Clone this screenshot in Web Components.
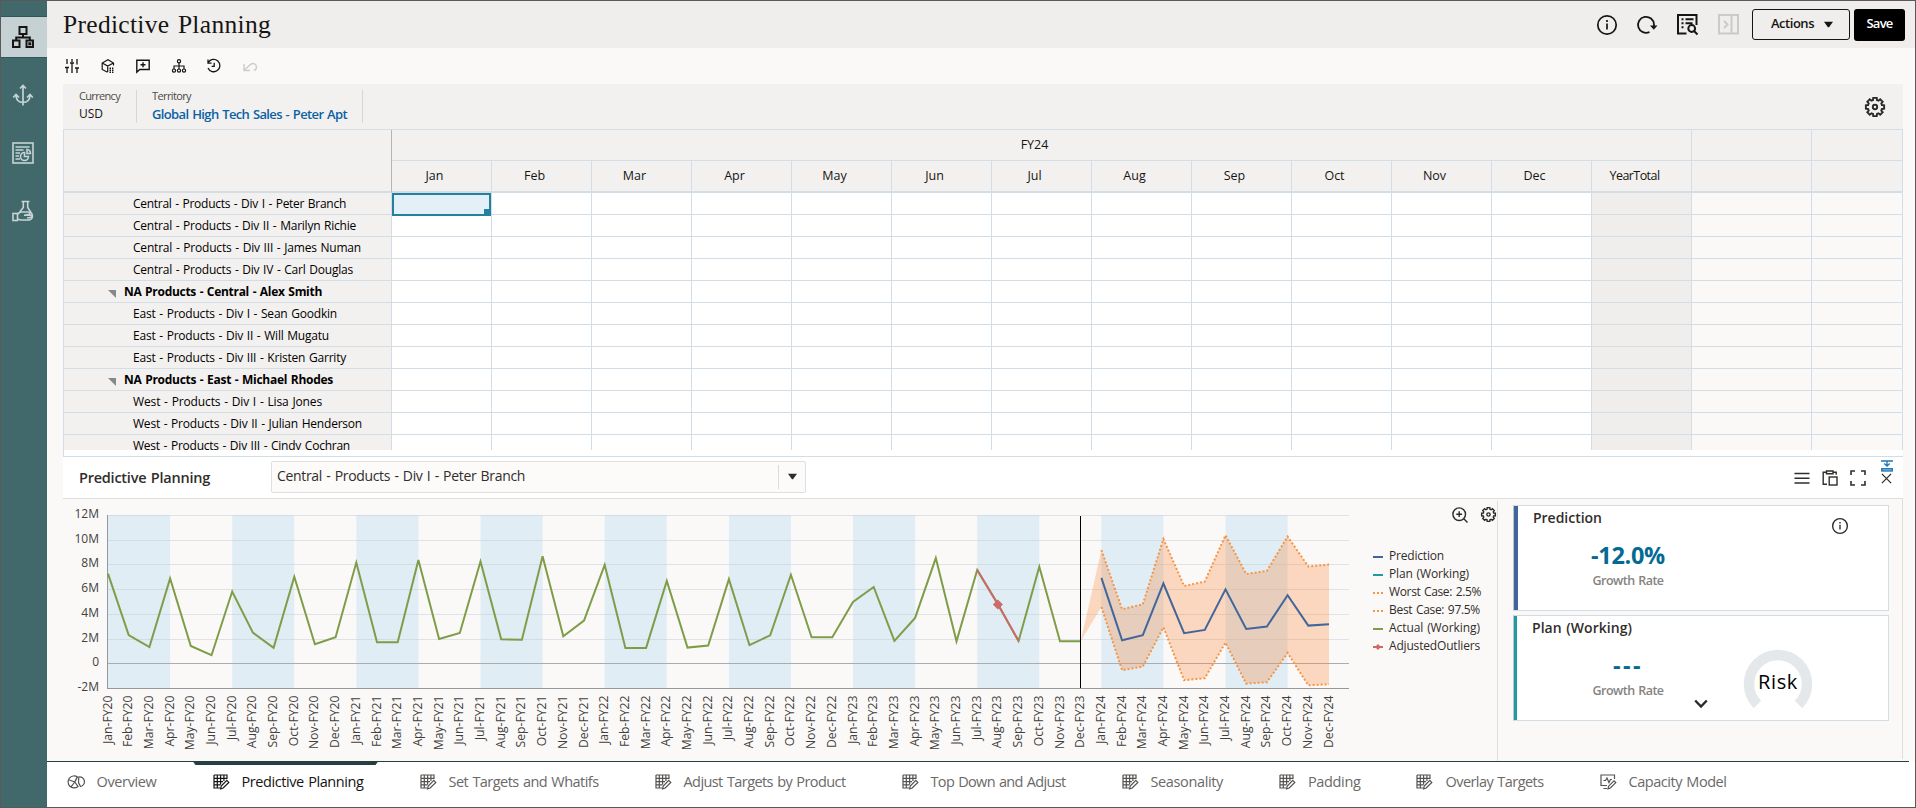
<!DOCTYPE html>
<html lang="en">
<head>
<meta charset="utf-8">
<title>Predictive Planning</title>
<style>
  html, body {
    margin: 0;
    height: 100%;
    overflow: hidden;
  }

  body {
    font-family: "Open Sans", "Noto Sans", sans-serif;
    font-size: 12.5px;
    color: #161513;
    background: #fbf9f8;
  }
</style>
</head>
<body>
<pp-app></pp-app>

<script>
  const GEAR = (() => {
    // eight-tooth cog around 10,10
    const pts = [];
    for (let i = 0; i < 8; i++) {
      const a = (i * Math.PI) / 4;
      [[-0.28, 7.2], [-0.19, 9.3], [0.19, 9.3], [0.28, 7.2]].forEach(([d, r]) => {
        pts.push((10 + r * Math.sin(a + d)).toFixed(2) + ' ' + (10 - r * Math.cos(a + d)).toFixed(2));
      });
    }
    return `<path d="M${pts.join('L')}z"/><circle cx="10" cy="10" r="2.2"/>`;
  })();

  const SHEET = `<path d="M1 1h13v4M1 1v13h6M1 4.3h13M1 7.6h9M1 10.9h6.5M4.3 1v13M7.6 1v9.5M10.9 1v6"/>
    <path d="M7.6 14.8l.6-2.8 5.6-5.6 2 2-5.6 5.6z"/>`;

  // name: [viewBox size, stroke width, markup]
  const ICONS = {
    network: [22, 2, `<rect x="7.5" y="1" width="7" height="7"/><path d="M11 8v3.5M4.2 14.5v-3h13.6v3"/>
      <rect x="1" y="14.5" width="6.5" height="6.5"/><rect x="14.5" y="14.5" width="6.5" height="6.5"/>
      <rect x="16.3" y="16.3" width="3" height="3" fill="currentColor" stroke="none"/>`],
    anchor: [22, 1.7, '<path d="M11 1.5v20M8 4.5l3-3 3 3M4 11.5c.3 4.3 3 7 7 7s6.7-2.7 7-7M1.2 13.5l2.8-3 3 3M15 13.5l3-3 2.8 3"/>'],
    report: [22, 1.6, `<rect x="1" y="1" width="20" height="20"/><path d="M3.5 5h14M3.5 8h8M3.5 11h4.5M3.5 14h3.5M3.5 17h4.5"/>
      <path d="M12.5 10.5v4h4a4 4 0 1 1-4-4zM15 7.5a4 4 0 0 1 3.5 4H15z"/>`],
    flask: [22, 1.6, `<path d="M9.5 1.5h8M11.3 1.5v6L7.7 12M15.7 1.5v6l4.3 6.5c1 2.7 0 5-2.5 6h-9l-3-1"/>
      <rect x="1" y="13.5" width="4.5" height="7"/><path d="M5.5 14l3-2h8c2 .3 2 2.300 0 2.600l-4.500.7h8.500M20 15.500c.5 1.500-2 2.500-5 2.500"/>`],
    sliders: [14, 1.3, '<path d="M2 0v5M2 9v5M7 0v3M7 4.5V14M12 0v5.5M12 9.5V14M0 8.5h4M5 4h4M10 9h4"/>'],
    cube: [14, 1.2, `<path d="M12.5 6.500V4L7 .8 1.200 4v6.500L6.500 13.300M1.200 4l5.500 3 5.800-3M6.700 7v6"/>
      <path d="M8.500 9.200h1.500M11 9.200h1.400M8.500 11.200h1.500M11 11.200h1.400M8.500 13.200h1.500M11 13.200h1.400" stroke-width="1.4"/>`],
    comment: [14, 1.4, '<path d="M.8 1.2h12.4v9.3H3.8L.8 13.2zM7 3.3v5M4.5 5.8h5"/>'],
    tree: [14, 1.2, `<circle cx="7" cy="2.3" r="1.6"/><circle cx="2" cy="11.6" r="1.6"/><circle cx="7" cy="11.6" r="1.6"/>
      <circle cx="12" cy="11.6" r="1.6"/><path d="M7 4v6M2 10V7h10v3"/>`],
    history: [14, 1.3, '<path d="M1.3 3.5A6.2 6.2 0 1 1 1 9M1 .5v3.6h3.6M7.2 3.8v3.6H4.6"/>'],
    undo: [14, 1.5, '<path d="M1 5v6.5h6M1.5 11l5.8-5.3c3-2.3 6.2-.7 6.2 2.3 0 1.8-1.2 3.2-2.8 3.5"/>'],
    info: [20, 1.7, '<circle cx="10" cy="10" r="9.2"/><path d="M10 8.5v6M10 5v1.9"/>'],
    refresh: [20, 1.8, '<path d="M12.5 17A8 8 0 1 1 17 9.500v2"/><path d="M13 10.5h7.5l-3.7 4.2z" fill="currentColor" stroke="none"/>'],
    docsearch: [21, 2, `<path d="M9.5 19.5H1V1h18.5v10M4.5 5.3h2M8.5 5.3h8M4.5 9.3h2M8.5 9.3h7M4.5 13.3h2"/>
      <circle cx="14.7" cy="14.5" r="3.4"/><path d="M17 17l3.5 3.5"/>`],
    collapse: [21, 2, '<rect x="1" y="1" width="19" height="18.5"/><path d="M13.5 1v18.5M6 7l3.5 3.5L6 14"/>'],
    gear: [20, 1.9, GEAR],
    sheet: [16, 1.2, SHEET],
    pies: [16, 1.2, `<path d="M9.5 3A6 6 0 1 0 10 12.5L6.8 8zM6.8 8L1.3 6M6.8 8L3 12.8M9 3.2L6.8 8"/>
      <path d="M10.5 8.5l.3-5.5a4.8 4.8 0 0 1 1.7 9.5z"/>`],
    model: [16, 1.2, `<path d="M7 11.5H1V1h13.5v4M3.5 14.5H7M3.5 6.5h2L7 4l2 4.5 1.5-3H12"/>
      <path d="M8 14.8l.6-2.6 5.4-5.4 1.8 1.8-5.4 5.4z"/>`],
    zoomin: [16, 1.4, '<circle cx="7.2" cy="7.2" r="6.3"/><path d="M11.8 11.8l3.7 3.7M7.2 4.3v5.8M4.3 7.2h5.8"/>'],
    menu: [16, 1.4, '<path d="M.5 3.5h15M.5 8.2h15M.5 13h15"/>'],
    paste: [16, 1.4, '<path d="M5 14.3H1.2v-12h3.3M11 2.3h3.2v2.5M4.5 1H11v2.8H4.500z"/><rect x="7.2" y="7" width="7.8" height="8"/>'],
    expand: [16, 1.6, '<path d="M1 5V1h4M11 1h4v4M15 11v4h-4M5 15H1v-4"/>'],
    close: [12, 1.4, '<path d="M1 1l10 10M11 1L1 11"/>'],
    dock: [12, 1.3, '<path d="M0 1h12M6 1v5M3.3 3.5L6 6.2l2.7-2.7"/><rect x=".7" y="8.7" width="10.6" height="2.3" fill="#9fb9d5"/>'],
    caret: [10, 0, '<path d="M0 2h10L5.600 8h-1.200z" fill="currentColor"/>'],
    chevron: [14, 2.4, '<path d="M1.2 3.5l5.8 6 5.8-6"/>']
  };

  class PpElement extends HTMLElement {
    constructor() {
      super();
      this.attachShadow({ mode: 'open' });
    }

    connectedCallback() {
      this.shadowRoot.innerHTML = `<style>
        :host { display: block; box-sizing: border-box; }
        * { box-sizing: border-box; }
        ${this.css ? this.css() : ''}
      </style>${this.html()}`;
    }
  }

  // Single line of text, tracked so that it takes up exactly "w" pixels
  class PpText extends PpElement {
    css() {
      return ':host { display: inline-block; white-space: nowrap; flex: none; word-spacing: .07em; }';
    }
    html() {
      return '<slot></slot>';
    }
    connectedCallback() {
      super.connectedCallback();
      const w = Number(this.getAttribute('w'));
      const count = this.textContent.length;
      if (w && count > 1) {
        const natural = this.getBoundingClientRect().width;
        this.style.letterSpacing = ((w - natural) / count).toFixed(3) + 'px';
      }
    }
  }

  class PpIcon extends PpElement {
    css() {
      const size = this.getAttribute('size') || ICONS[this.getAttribute('name')][0];
      return `:host { display: block; flex: none; width: ${size}px; height: ${size}px; }
        svg { display: block; width: 100%; height: 100%; overflow: visible; }`;
    }
    html() {
      const [box, stroke, body] = ICONS[this.getAttribute('name')];
      return `<svg viewBox="0 0 ${box} ${box}" fill="none" stroke="currentColor" stroke-width="${stroke}">${body}</svg>`;
    }
  }

  class PpSidebar extends PpElement {
    css() {
      return `
        :host { width: 46px; background: #41696c; padding-top: 15px; color: #c7d3d4; }
        .item { height: 40px; margin-bottom: 18px; display: flex; align-items: center; justify-content: center; padding-right: 2px; }
        .active { background: #c5d1d3; color: #161513; height: 42px; margin-bottom: 17px; border: solid #325559; border-width: 1px 0; }
      `;
    }
    html() {
      return ['network', 'anchor', 'report', 'flask'].map((name, i) =>
        `<div class="item ${i === 0 ? 'active' : ''}"><pp-icon name="${name}"></pp-icon></div>`).join('');
    }
  }

  class PpHeader extends PpElement {
    css() {
      return `
        :host { display: flex; align-items: center; height: 47px; background: #f0eeec; padding: 0 10px 0 16px; }
        .title { font: 25.5px/40px "Liberation Serif", serif; }
        .icons { display: flex; align-items: center; gap: 20px; margin-left: auto; padding-right: 13px; }
        .off { color: #cbcaca; }
        .btn { display: flex; align-items: center; justify-content: center; height: 31px; border-radius: 3px;
          font-size: 13px; font-weight: 600; line-height: 20px; padding-bottom: 4px; }
        .actions { width: 98px; border: 1px solid #161513; gap: 10px; padding-left: 2px; margin-right: 4px; }
        .actions pp-icon { margin-top: 3px; }
        .save { width: 51px; height: 32px; background: #000; color: #fff; }
      `;
    }
    html() {
      return `
        <pp-text class="title" w="208">Predictive Planning</pp-text>
        <div class="icons">
          <pp-icon name="info"></pp-icon>
          <pp-icon name="refresh"></pp-icon>
          <pp-icon name="docsearch"></pp-icon>
          <pp-icon name="collapse" class="off"></pp-icon>
        </div>
        <div class="btn actions"><pp-text w="43">Actions</pp-text><pp-icon name="caret" size="9"></pp-icon></div>
        <div class="btn save"><pp-text w="26">Save</pp-text></div>
      `;
    }
  }

  class PpToolbar extends PpElement {
    css() {
      return `
        :host { display: flex; align-items: center; gap: 21.5px; height: 36px; padding-left: 2px; }
        .off { color: #d0cecc; }
      `;
    }
    html() {
      return ['sliders', 'cube', 'comment', 'tree', 'history', 'undo'].map((name) =>
        `<pp-icon name="${name}" class="${name === 'undo' ? 'off' : ''}"></pp-icon>`).join('');
    }
  }

  class PpPov extends PpElement {
    css() {
      return `
        :host { display: flex; height: 45px; background: #f3f1ef; padding: 0 18px 0 16px; }
        .dim { display: flex; flex-direction: column; align-items: flex-start; border-right: 1px solid #d9d7d5;
          height: 33px; margin-top: 6px; margin-right: 15px; }
        .first { width: 58px; }
        .second { width: 211px; }
        .name { font-size: 11px; line-height: 12px; color: #4c4a47; }
        .value { font-size: 12px; line-height: 15px; margin-top: 4px; }
        .link { font-size: 13px; font-weight: 600; line-height: 17px; margin-top: 4px; color: #0b61a4; }
        pp-icon { margin: 13px 0 0 auto; color: #2b2a28; }
      `;
    }
    html() {
      return `
        <div class="dim first"><pp-text class="name" w="41">Currency</pp-text><pp-text class="value" w="24">USD</pp-text></div>
        <div class="dim second"><pp-text class="name" w="39">Territory</pp-text><pp-text class="link" w="195">Global High Tech Sales - Peter Apt</pp-text></div>
        <pp-icon name="gear"></pp-icon>
      `;
    }
  }

  const MONTHS = ['Jan', 'Feb', 'Mar', 'Apr', 'May', 'Jun', 'Jul', 'Aug', 'Sep', 'Oct', 'Nov', 'Dec'];

  const ROWS = [
    ['Central - Products - Div I - Peter Branch', 213],
    ['Central - Products - Div II - Marilyn Richie', 223],
    ['Central - Products - Div III - James Numan', 228],
    ['Central - Products - Div IV - Carl Douglas', 220],
    ['NA Products - Central - Alex Smith', 198, true],
    ['East - Products - Div I - Sean Goodkin', 204],
    ['East - Products - Div II - Will Mugatu', 196],
    ['East - Products - Div III - Kristen Garrity', 213],
    ['NA Products - East - Michael Rhodes', 209, true],
    ['West - Products - Div I - Lisa Jones', 189],
    ['West - Products - Div II - Julian Henderson', 229],
    ['West - Products - Div III - Cindy Cochran', 217]
  ];

  class PpGrid extends PpElement {
    css() {
      return `
        :host { height: 328px; background: #fff; border: solid #d3dde6; border-width: 1px 0 1px 1px; }
        .wrap { height: 320px; overflow: hidden; }
        .sheet { display: grid; grid-template-columns: 328px repeat(13, 100px) 120px 91px; grid-template-rows: 31px 32px; grid-auto-rows: 22px; }
        .sheet > div { border: solid #d3dde6; border-width: 0 1px 1px 0; }
        .head { background: #f3f1ef; display: flex; align-items: center; justify-content: center; padding-right: 14px; padding-bottom: 2px; }
        .sheet > .month { border-bottom-width: 2px; }
        .sheet > .corner { grid-row: span 2; border-bottom-width: 2px; border-right-color: #b4b5b6; }
        .year { grid-column: span 13; }
        .label { background: #f3f1ef; padding-left: 69px; line-height: 22px; font-size: 12px; color: #000; white-space: nowrap; display: flex; }
        .parent { font-weight: 700; padding-left: 44px; }
        .parent svg { width: 8px; height: 8px; margin: 9px 8px 0 0; flex: none; }
        .total { background: #f0eeec; }
        .blank { background: #fbf9f8; }
        .cell { position: relative; }
        .focus { position: absolute; top: 0; left: 0; width: 99px; height: 23px; background: #e3f0f7; border: 2px solid #2381a0; z-index: 1; }
        .focus::after { content: ""; position: absolute; right: -1px; bottom: -1px; width: 6px; height: 6px; background: #2381a0; }
      `;
    }
    html() {
      const months = MONTHS.map((m) => `<div class="head month">${m}</div>`).join('');
      const body = ROWS.map(([text, w, parent], i) => {
        const arrow = parent ? '<svg viewBox="0 0 8 8"><path d="M0 0h8v8z" fill="#85898c"/></svg>' : '';
        const cells = MONTHS.map((m, c) =>
          `<div class="cell">${i === 0 && c === 0 ? '<div class="focus"></div>' : ''}</div>`).join('');
        return `<div class="label ${parent ? 'parent' : ''}">${arrow}<pp-text w="${w}">${text}</pp-text></div>
          ${cells}<div class="total"></div><div class="blank"></div><div class="blank"></div>`;
      }).join('');
      return `<div class="wrap"><div class="sheet">
        <div class="head corner"></div><div class="head year">FY24</div><div class="head"></div><div class="head"></div>
        ${months}<div class="head month"><pp-text w="50">YearTotal</pp-text></div>
        <div class="head month"></div><div class="head month"></div>
        ${body}
      </div></div>`;
    }
  }

  class PpPanelHeader extends PpElement {
    css() {
      return `
        :host { display: flex; height: 42px; background: #fff; border-bottom: 1px solid #dfdedd; padding: 0 11px 0 16px; color: #312d2a; }
        .name { font-size: 14.5px; font-weight: 600; line-height: 41px; width: 192px; }
        .select { display: flex; align-items: center; width: 535px; height: 32px; margin-top: 4px; background: #fcfbfa;
          border: 1px solid #e1dfde; border-radius: 2px; padding: 0 9px 4px 5px; font-size: 14px; }
        .drop { margin: 4px 0 0 auto; height: 24px; border-left: 1px solid #dcdbda; padding: 7px 0 0 9px; width: 18px; }
        .tools { display: flex; gap: 12px; margin-left: auto; padding-top: 13px; }
        .last { position: relative; margin: 3px 0 0 3px; }
        .dock { position: absolute; top: -13px; left: 0; color: #1c74b5; }
      `;
    }
    html() {
      return `
        <div class="name"><pp-text w="131">Predictive Planning</pp-text></div>
        <div class="select"><pp-text w="248">Central - Products - Div I - Peter Branch</pp-text>
          <div class="drop"><pp-icon name="caret" size="9"></pp-icon></div></div>
        <div class="tools">
          <pp-icon name="menu"></pp-icon><pp-icon name="paste"></pp-icon><pp-icon name="expand"></pp-icon>
          <div class="last"><pp-icon name="close" size="11"></pp-icon><pp-icon class="dock" name="dock"></pp-icon></div>
        </div>
      `;
    }
  }

  // monthly values in millions, FY20 to FY23
  const ACTUAL = [
    7.3, 2.34, 1.37, 6.9, 1.45, 0.7, 5.85, 2.53, 1.29, 7.05, 1.59, 2.15,
    8.2, 1.75, 1.75, 8.4, 2.02, 2.5, 8.28, 1.99, 1.96, 8.7, 2.23, 3.5,
    8, 1.29, 1.29, 6.7, 1.32, 1.48, 6.85, 1.51, 2.31, 7.2, 2.15, 2.15,
    5.01, 6.22, 1.86, 3.72, 8.55, 1.83, 7.6, 4.82, 1.85, 7.85, 1.83, 1.83
  ];
  // FY24
  const PREDICTION = [6.95, 1.91, 2.32, 6.5, 2.48, 2.75, 6.02, 2.83, 3.02, 5.55, 3.1, 3.2];
  const BEST = [9.2, 4.42, 4.82, 10.1, 6.3, 6.65, 10.4, 7.27, 7.52, 10.3, 7.87, 8.03];
  const WORST = [4.6, -0.51, -0.22, 2.96, -1.32, -1.16, 1.72, -1.59, -1.48, 0.89, -1.73, -1.65];

  class PpChart extends PpElement {
    css() {
      return `
        :host { display: flex; height: 260px; margin-top: 2px; border-right: 1px solid #dfdedd; width: 1435px; }
        svg { display: block; flex: none; }
        text { font-size: 12px; fill: #423f3c; }
        .month { font-size: 12.2px; }
        .side { flex: 1; }
        .tools { display: flex; gap: 13px; justify-content: flex-end; padding: 6px 1px 0 0; color: #2b2a28; }
        .legend { display: grid; grid-auto-rows: 18px; margin-top: 23px; padding-left: 10px; }
        .legend div { display: flex; align-items: center; gap: 6px; color: #312d2a; font-size: 12px; }
        .legend svg { width: 10px; height: 10px; margin-top: 3px; overflow: visible; }
      `;
    }

    x(i) {
      return 45 + i * 20.695;
    }
    y(v) {
      return 162.9 - v * 12.37;
    }
    points(values, start) {
      return values.map((v, i) => this.x(i + start).toFixed(1) + ',' + this.y(v).toFixed(1)).join(' ');
    }

    html() {
      let bands = '';
      for (let i = 0; i < 60; i += 6) {
        bands += `<rect x="${this.x(i)}" y="14" width="${this.x(3) - this.x(0)}" height="173" fill="#e0edf5"/>`;
      }
      let lines = '';
      for (let v = 12; v >= -2; v -= 2) {
        const y = Math.floor(this.y(v)) + 0.5;
        const stroke = v === 0 ? '#abacb2' : v === -2 ? '#96989c' : '#c4ccd4';
        lines += `<path d="M44 ${y}H1286" stroke="${stroke}" ${v > 0 ? 'stroke-opacity=".5"' : ''}/>
          <text x="36" y="${y + 2.5}" text-anchor="end">${v === 0 ? '0' : v + 'M'}</text>`;
      }
      let months = '';
      for (let i = 0; i < 60; i++) {
        months += `<text class="month" text-anchor="end" transform="translate(${(this.x(i) + 3.5).toFixed(1)} 194.5) rotate(-90)">${MONTHS[i % 12]}-FY2${Math.floor(i / 12)}</text>`;
      }
      const area = this.points([1.83].concat(BEST), 47) + ' ' +
        this.points(WORST, 48).split(' ').reverse().join(' ');
      const dx = this.x(43);
      const dy = this.y(4.8);
      const legend = [
        ['Prediction', 55, '#42669c'],
        ['Plan (Working)', 80, '#1f9aa0'],
        ['Worst Case: 2.5%', 92, '#f79442', 1],
        ['Best Case: 97.5%', 91, '#f79442', 1],
        ['Actual (Working)', 91, '#7f9d49'],
        ['AdjustedOutliers', 91, '#cd6a67', 0, 1]
      ].map(([text, w, color, dots, mark]) => `<div>
          <svg viewBox="0 0 10 10"><path d="M0 5h10" stroke="${color}" stroke-width="2" ${dots ? 'stroke-dasharray="2 2"' : ''}/>
          ${mark ? `<path d="M5 2l3 3-3 3-3-3z" fill="${color}"/>` : ''}</svg>
          <pp-text w="${w}">${text}</pp-text></div>`).join('');

      return `
        <svg width="1300" height="260" fill="none">
          ${bands}
          ${lines}
          <path d="M44.5 14V187" stroke="#96989c"/>
          <polygon points="${area}" fill="rgba(250,140,60,.31)"/>
          <g stroke-width="2" stroke="#7f9d49">
            <polyline points="${this.points(ACTUAL, 0)}"/>
            <polyline points="${this.points(ACTUAL.slice(42, 45), 42)}" stroke="#cd6a67"/>
            <polyline points="${this.points(PREDICTION, 48)}" stroke="#42669c"/>
            <polyline points="${this.points(BEST, 48)}" stroke="#f79442" stroke-dasharray="2 2"/>
            <polyline points="${this.points(WORST, 48)}" stroke="#f79442" stroke-dasharray="2 2"/>
          </g>
          <path d="M${dx} ${dy - 5}l5 5-5 5-5-5z" fill="#cd6a67"/>
          <path d="M1017.5 15V187" stroke="#000"/>
          ${months}
        </svg>
        <div class="side">
          <div class="tools"><pp-icon name="zoomin"></pp-icon><pp-icon name="gear" size="15"></pp-icon></div>
          <div class="legend">${legend}</div>
        </div>
      `;
    }
  }

  class PpCard extends PpElement {
    css() {
      const bar = Number(this.getAttribute('bar'));
      return `
        :host { position: relative; height: 106px; background: #fff; border: 1px solid #d3dde6;
          border-left-color: #b9c6d2; margin-bottom: 4px; }
        .bar { position: absolute; inset: 0 auto 0 0; width: ${bar}px; background: ${this.getAttribute('color')}; }
        .name { font-size: 14px; font-weight: 600; line-height: 20px; color: #312d2a; padding: 2px 0 0 ${bar + 15}px; }
        .stat { position: absolute; left: 49px; top: 33px; width: 130px; text-align: center; }
        .value { font-size: 23.5px; font-weight: 700; line-height: 32px; color: #046a92; }
        .caption { font-size: 12.5px; font-weight: 600; line-height: 19px; color: #858381; }
        ::slotted(*) { position: absolute; }
      `;
    }
    html() {
      return `
        <div class="bar"></div>
        <div class="name"><pp-text w="${this.getAttribute('name-width')}">${this.getAttribute('name')}</pp-text></div>
        <div class="stat">
          <div class="value"><pp-text w="${this.getAttribute('value-width')}">${this.getAttribute('value')}</pp-text></div>
          <div class="caption"><pp-text w="71">Growth Rate</pp-text></div>
        </div>
        <slot></slot>
      `;
    }
  }

  class PpGauge extends PpElement {
    css() {
      return `
        :host { width: 70px; height: 70px; display: grid; place-items: center; }
        svg, pp-text { grid-area: 1 / 1; }
        pp-text { font-size: 20px; line-height: 28px; color: #000; padding-bottom: 4px; }
      `;
    }
    html() {
      return `<svg width="70" height="70"><path d="M14.5 55.5a29 29 0 1 1 41 0" fill="none" stroke="#e4e8ea" stroke-width="10.5"/></svg>
        <pp-text w="40">${this.getAttribute('label')}</pp-text>`;
    }
  }

  class PpSummary extends PpElement {
    css() {
      return `
        :host { flex: 1; border-right: 1px solid #dfdedd; height: 260px; padding: 6px 13px 0 15px; }
        .info { right: 40px; top: 12px; color: #2b2a28; }
        .more { left: 180px; top: 81px; color: #2b2a28; }
        pp-gauge { left: 229px; top: 33px; }
      `;
    }
    html() {
      return `
        <pp-card name="Prediction" name-width="69" value="-12.0%" value-width="74" bar="4" color="#42669c">
          <pp-icon class="info" name="info" size="16"></pp-icon>
        </pp-card>
        <pp-card name="Plan (Working)" name-width="100" value="---" value-width="30" bar="3" color="#1f9aa0">
          <pp-icon class="more" name="chevron"></pp-icon>
          <pp-gauge label="Risk"></pp-gauge>
        </pp-card>
      `;
    }
  }

  class PpTabs extends PpElement {
    css() {
      return `
        :host { position: relative; display: flex; gap: 56px; height: 46px; background: #fff; padding-left: 20.5px; color: #6b6967; font-size: 14.5px; }
        .rule { position: absolute; top: 0; left: 0; right: 6px; height: 1px; background: #263f41; }
        .tab { display: flex; align-items: center; gap: 13px; position: relative; height: 40px; }
        .tab pp-icon { color: #55524f; margin-top: 2px; }
        .on, .tab.on pp-icon { color: #161513; }
        .on::before { content: ""; position: absolute; top: 0; left: -20px; right: -15px; height: 4px; background: #263f41;
          clip-path: polygon(0 0, 100% 0, calc(100% - 3px) 100%, 3px 100%); }
      `;
    }
    html() {
      return '<div class="rule"></div>' + [
        ['Overview', 60, 'pies'],
        ['Predictive Planning', 122, 'sheet', 1],
        ['Set Targets and Whatifs', 150, 'sheet'],
        ['Adjust Targets by Product', 162, 'sheet'],
        ['Top Down and Adjust', 135, 'sheet'],
        ['Seasonality', 72.5, 'sheet'],
        ['Padding', 52.5, 'sheet'],
        ['Overlay Targets', 98, 'sheet'],
        ['Capacity Model', 98, 'model']
      ].map(([text, w, icon, on]) =>
        `<div class="tab ${on ? 'on' : ''}"><pp-icon name="${icon}"></pp-icon><pp-text w="${w}">${text}</pp-text></div>`).join('');
    }
  }

  class PpApp extends PpElement {
    css() {
      return `
        :host { display: flex; width: 1916px; height: 808px; border: 1px solid #5a5858; }
        main { flex: 1; min-width: 0; }
        section { margin: 0 12px 0 16px; }
        .panel { display: flex; height: 262px; }
      `;
    }
    html() {
      return `
        <pp-sidebar></pp-sidebar>
        <main>
          <pp-header></pp-header>
          <section>
            <pp-toolbar></pp-toolbar>
            <pp-pov></pp-pov>
            <pp-grid></pp-grid>
            <pp-panel-header></pp-panel-header>
            <div class="panel"><pp-chart></pp-chart><pp-summary></pp-summary></div>
          </section>
          <pp-tabs></pp-tabs>
        </main>
      `;
    }
  }

  customElements.define('pp-text', PpText);
  customElements.define('pp-icon', PpIcon);
  customElements.define('pp-sidebar', PpSidebar);
  customElements.define('pp-header', PpHeader);
  customElements.define('pp-toolbar', PpToolbar);
  customElements.define('pp-pov', PpPov);
  customElements.define('pp-grid', PpGrid);
  customElements.define('pp-panel-header', PpPanelHeader);
  customElements.define('pp-chart', PpChart);
  customElements.define('pp-card', PpCard);
  customElements.define('pp-gauge', PpGauge);
  customElements.define('pp-summary', PpSummary);
  customElements.define('pp-tabs', PpTabs);
  customElements.define('pp-app', PpApp);
</script>
</body>
</html>
